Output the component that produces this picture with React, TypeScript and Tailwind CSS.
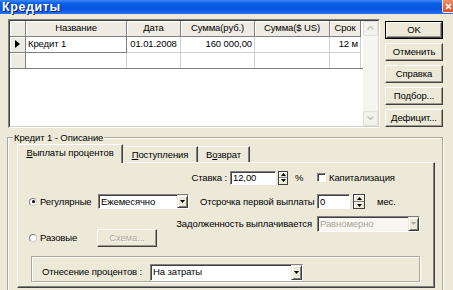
import React from "react";

const FONT = "font-['Liberation_Sans','Arial',sans-serif]";

function TriDown({ color = "#000" }: { color?: string }) {
  return (
    <svg width="5" height="3" viewBox="0 0 5 3">
      <path d="M0 0L5 0L2.5 3Z" fill={color} />
    </svg>
  );
}
function TriUp({ color = "#000" }: { color?: string }) {
  return (
    <svg width="5" height="3" viewBox="0 0 5 3">
      <path d="M0 3L5 3L2.5 0Z" fill={color} />
    </svg>
  );
}

function Spin({ w }: { w: "a" | "b" }) {
  return (
    <div
      className={
        (w === "a" ? "w-[10px] h-[14px] " : "w-[12px] h-[15px] ") +
        "flex flex-col border border-[#404040] bg-[#ece9d8]"
      }
    >
      <div className="flex-1 flex items-center justify-center border-b border-b-[#808080] shadow-[inset_1px_1px_0_#fff]">
        <TriUp />
      </div>
      <div className="flex-1 flex items-center justify-center shadow-[inset_1px_1px_0_#fff]">
        <TriDown />
      </div>
    </div>
  );
}

function Combo({
  text,
  cls,
  disabled,
}: {
  text: string;
  cls: string;
  disabled?: boolean;
}) {
  return (
    <div
      className={
        cls +
        " flex border border-t-[#808080] border-l-[#808080] border-r-white border-b-white " +
        (disabled ? "bg-[#f7f6f0]" : "bg-white")
      }
    >
      <div className="flex-1 flex items-center pl-[2px] shadow-[inset_1px_1px_0_#404040]">
        <span className={disabled ? "text-[#a7a69e]" : "text-black"}>{text}</span>
      </div>
      <div className="w-[11px] flex items-center justify-center bg-[#ece9d8] border border-t-[#ece9d8] border-l-[#ece9d8] border-r-[#404040] border-b-[#404040] shadow-[inset_1px_1px_0_#fff,inset_-1px_-1px_0_#808080]">
        <TriDown color={disabled ? "#a7a69e" : "#000"} />
      </div>
    </div>
  );
}

function Edit({ text, cls }: { text: string; cls: string }) {
  return (
    <div
      className={
        cls +
        " flex items-center pl-[2px] bg-white border border-t-[#808080] border-l-[#808080] border-r-white border-b-white shadow-[inset_1px_1px_0_#404040]"
      }
    >
      {text}
    </div>
  );
}

function Radio({ checked }: { checked?: boolean }) {
  return (
    <div className="w-[8px] h-[8px] rounded-full bg-white border border-t-[#808080] border-l-[#808080] border-r-[#d4d0c8] border-b-[#d4d0c8] flex items-center justify-center">
      {checked && <div className="w-[3px] h-[3px] rounded-full bg-black" />}
    </div>
  );
}

function Button({
  children,
  def,
  disabled,
  cls,
}: {
  children: React.ReactNode;
  def?: boolean;
  disabled?: boolean;
  cls: string;
}) {
  const inner =
    "w-full h-full flex items-center justify-center bg-[#ece9d8] border border-t-white border-l-white border-r-[#404040] border-b-[#404040] shadow-[inset_-1px_-1px_0_#9d9a8c]";
  return def ? (
    <div className={cls + " border border-black"}>
      <div className={inner}>{children}</div>
    </div>
  ) : (
    <div className={cls}>
      <div className={inner}>
        {disabled ? (
          <span className="text-[#aca899] [text-shadow:1px_1px_0_#fff]">{children}</span>
        ) : (
          children
        )}
      </div>
    </div>
  );
}

function HeadCell({ cls, children }: { cls: string; children?: React.ReactNode }) {
  return (
    <div
      className={
        cls +
        " h-full flex items-center justify-center bg-[#eeece2] border-r border-b border-r-[#808080] border-b-[#808080] shadow-[inset_1px_1px_0_#fff]"
      }
    >
      {children}
    </div>
  );
}

function Grid() {
  return (
    <div className="w-[372px] h-[109px] border border-t-[#808080] border-l-[#808080] border-r-white border-b-white">
      <div className="w-full h-full flex bg-white border border-t-[#404040] border-l-[#404040] border-r-[#d4d0c8] border-b-[#d4d0c8]">
        <div className="w-[353px] flex flex-col">
          <div className="w-[353px] flex flex-col border-b border-b-[#808080]">
            {/* header */}
            <div className="h-[16px] flex">
              <HeadCell cls="w-[16px]" />
              <HeadCell cls="w-[101px]">Название</HeadCell>
              <HeadCell cls="w-[54px]">Дата</HeadCell>
              <HeadCell cls="w-[74px]">Сумма(руб.)</HeadCell>
              <HeadCell cls="w-[75px]">Сумма($ US)</HeadCell>
              <HeadCell cls="w-[31px]">Срок</HeadCell>
            </div>
            {/* row 1 */}
            <div className="h-[16px] flex">
              <div className="w-[16px] h-full flex items-center justify-center bg-[#eeece2] border-r border-b border-r-[#808080] border-b-[#808080] shadow-[inset_1px_1px_0_#fff]">
                <svg width="5" height="8" viewBox="0 0 5 8">
                  <path d="M0 0L5 4L0 8Z" fill="#000" />
                </svg>
              </div>
              <div className="w-[101px] h-full flex items-center pl-[2px] border-r border-b border-r-[#808080] border-b-[#808080]">
                Кредит 1
              </div>
              <div className="w-[54px] h-full flex items-center justify-center border-r border-b border-[#d0d0d0]">
                01.01.2008
              </div>
              <div className="w-[74px] h-full flex items-center justify-end pr-[2px] border-r border-b border-[#d0d0d0]">
                160 000,00
              </div>
              <div className="w-[75px] h-full border-r border-b border-[#d0d0d0]" />
              <div className="w-[31px] h-full flex items-center justify-end pr-[2px] border-r border-b border-[#d0d0d0]">
                12 м
              </div>
            </div>
            {/* row 2 */}
            <div className="h-[15px] flex">
              <div className="w-[16px] h-full bg-[#eeece2] border-r border-r-[#808080] shadow-[inset_1px_1px_0_#fff]" />
              <div className="w-[101px] h-full border-r border-[#d0d0d0]" />
              <div className="w-[54px] h-full border-r border-[#d0d0d0]" />
              <div className="w-[74px] h-full border-r border-[#d0d0d0]" />
              <div className="w-[75px] h-full border-r border-[#d0d0d0]" />
              <div className="w-[31px] h-full border-r border-[#d0d0d0]" />
            </div>
          </div>
        </div>
        {/* scrollbar */}
        <div className="w-[15px] flex flex-col justify-between bg-[#f6f5f0]">
          <div className="h-[15px] flex items-center justify-center bg-[#f3f2ec] border border-[#e2e0d6] rounded-[2px]">
            <svg width="7" height="4" viewBox="0 0 7 4">
              <path d="M0.5 3.5L3.5 0.5L6.5 3.5" stroke="#c5c3b8" strokeWidth="1.3" fill="none" />
            </svg>
          </div>
          <div className="h-[15px] flex items-center justify-center bg-[#f3f2ec] border border-[#e2e0d6] rounded-[2px]">
            <svg width="7" height="4" viewBox="0 0 7 4">
              <path d="M0.5 0.5L3.5 3.5L6.5 0.5" stroke="#c5c3b8" strokeWidth="1.3" fill="none" />
            </svg>
          </div>
        </div>
      </div>
    </div>
  );
}

export default function App() {
  return (
    <div
      className={
        FONT +
        " w-[453px] h-[290px] overflow-hidden bg-[#ece9d8] flex flex-col text-[9.5px] tracking-[-0.1px] leading-none text-black whitespace-nowrap"
      }
    >
      {/* title bar */}
      <div className="h-[15px] flex items-start justify-between bg-[linear-gradient(to_bottom,#3d86f5_0%,#0a5fe6_25%,#0954e0_70%,#2a6ff0_100%)]">
        <div className="pl-[2px] pt-[1px] text-white font-bold text-[12.5px] tracking-[0.6px] [text-shadow:1px_1px_0_#0a246a]">
          Кредиты
        </div>
        <div className="w-[11px] h-[13px] flex items-center justify-center rounded-bl-[2px] border-l border-b border-white/80 bg-[linear-gradient(to_bottom,#ec8f6c,#d9532a)]">
          <svg width="7" height="7" viewBox="0 0 7 7">
            <path d="M1 1L6 6M6 1L1 6" stroke="#fff" strokeWidth="1.6" />
          </svg>
        </div>
      </div>

      {/* top row */}
      <div className="flex pl-[8px] pt-[5px]">
        <Grid />
        <div className="ml-[5px] pt-[2px] flex flex-col gap-[4px]">
          <Button def cls="w-[58px] h-[18px]">
            OK
          </Button>
          <Button cls="w-[58px] h-[18px]">Отменить</Button>
          <Button cls="w-[58px] h-[18px]">Справка</Button>
          <Button cls="w-[58px] h-[18px]">Подбор...</Button>
          <Button cls="w-[58px] h-[18px]">Дефицит...</Button>
        </div>
      </div>

      {/* group box */}
      <div className="relative ml-[7px] mt-[9px] w-[436px] h-[170px] shrink-0 border border-[#aca899] shadow-[inset_1px_1px_0_#fff,1px_1px_0_#fff]">
        <div className="absolute left-[5px] top-[-5px] px-[1px] bg-[#ece9d8]">Кредит 1 - Описание</div>

        <div className="ml-[9px] mt-[6px] w-[418px] flex flex-col">
          {/* tabs */}
          <div className="h-[18px] flex items-end relative z-10">
            <div className="w-[106px] h-[19px] mb-[-1px] flex items-center justify-center pb-[2px] bg-[#ece9d8] border-l border-t border-r border-l-white border-t-white border-r-[#404040] shadow-[inset_-1px_0_0_#808080]">
              <span>
                <span className="underline">В</span>ыплаты процентов
              </span>
            </div>
            <div className="w-[75px] h-[16px] flex items-center justify-center pt-[1px] bg-[#ece9d8] border-t border-r border-t-white border-r-[#404040] shadow-[inset_-1px_0_0_#808080]">
              <span>
                <span className="underline">П</span>оступления
              </span>
            </div>
            <div className="w-[52px] h-[16px] flex items-center justify-center pt-[1px] bg-[#ece9d8] border-t border-r border-t-white border-r-[#404040] shadow-[inset_-1px_0_0_#808080]">
              <span>
                В<span className="underline">о</span>зврат
              </span>
            </div>
          </div>

          {/* panel */}
          <div className="h-[126px] flex flex-col border border-t-white border-l-white border-r-[#404040] border-b-[#404040] shadow-[inset_-1px_-1px_0_#808080]">
            {/* row A */}
            <div className="mt-[8px] h-[14px] flex items-center">
              <div className="w-[209px] text-right">Ставка :</div>
              <Edit text="12,00" cls="ml-[3px] w-[46px] h-[14px]" />
              <div className="ml-[2px]">
                <Spin w="a" />
              </div>
              <div className="ml-[7px] w-[22px]">%</div>
              <div className="w-[9px] h-[9px] bg-white border border-t-[#808080] border-l-[#808080] border-r-white border-b-white shadow-[inset_1px_1px_0_#404040]" />
              <div className="ml-[3px]">Капитализация</div>
            </div>

            {/* row B */}
            <div className="mt-[9px] h-[16px] flex items-center">
              <div className="ml-[11px]">
                <Radio checked />
              </div>
              <div className="ml-[3px] w-[58px]">Регулярные</div>
              <Combo text="Ежемесячно" cls="w-[91px] h-[15px]" />
              <div className="ml-[11px] w-[117px]">Отсрочка первой выплаты</div>
              <Edit text="0" cls="w-[33px] h-[15px]" />
              <div className="ml-[3px]">
                <Spin w="b" />
              </div>
              <div className="ml-[12px]">мес.</div>
            </div>

            {/* row C/D */}
            <div className="mt-[6px] flex items-start">
              <div className="mt-[13px] h-[18px] flex items-center">
                <div className="ml-[11px]">
                  <Radio />
                </div>
                <div className="ml-[3px] w-[57px]">Разовые</div>
                <Button disabled cls="w-[60px] h-[18px]">
                  Схема...
                </Button>
              </div>
              <div className="h-[16px] flex items-center">
                <div className="w-[155px] text-right">Задолженность выплачивается</div>
                <Combo text="Равномерно" cls="ml-[5px] w-[103px] h-[16px]" disabled />
              </div>
            </div>

            {/* inner group */}
            <div className="ml-[13px] mt-[9px] w-[389px] h-[26px] border border-[#aca899] shadow-[inset_1px_1px_0_#fff,1px_1px_0_#fff] flex items-start pt-[7px]">
              <div className="h-[17px] flex items-center">
                <div className="ml-[10px] w-[108px]">Отнесение процентов :</div>
                <Combo text="На затраты" cls="w-[153px] h-[17px]" />
              </div>
            </div>
          </div>
        </div>
      </div>
    </div>
  );
}
